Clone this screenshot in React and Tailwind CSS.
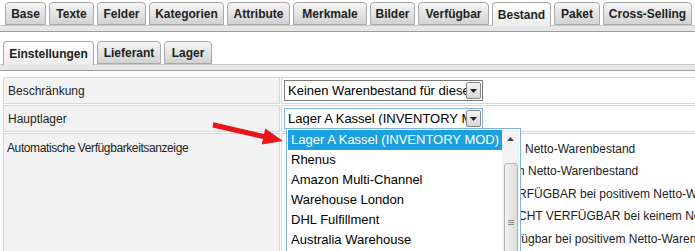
const topTabs = [
  { label: 'Base', w: 'w-[41px]' },
  { label: 'Texte', w: 'w-[45px]' },
  { label: 'Felder', w: 'w-[49px]' },
  { label: 'Kategorien', w: 'w-[75px]' },
  { label: 'Attribute', w: 'w-[63px]' },
  { label: 'Merkmale', w: 'w-[74px]' },
  { label: 'Bilder', w: 'w-[45px]' },
  { label: 'Verfügbar', w: 'w-[71px]' },
  { label: 'Bestand', w: 'w-[59px]', active: true },
  { label: 'Paket', w: 'w-[46px]' },
  { label: 'Cross-Selling', w: 'w-[89px]' },
];

const subTabs = [
  { label: 'Einstellungen', w: 'w-[91px]', active: true },
  { label: 'Lieferant', w: 'w-[64px]' },
  { label: 'Lager', w: 'w-[48px]' },
];

const warehouses = [
  'Lager A Kassel (INVENTORY MOD)',
  'Rhenus',
  'Amazon Multi-Channel',
  'Warehouse London',
  'DHL Fulfillment',
  'Australia Warehouse',
];

const Tab = ({ label, w, active }) => (
  <div
    className={`${w} h-[23px] flex items-center justify-center border border-[#a9a9a9] rounded-t-[4px] text-[12px] font-bold text-[#222] whitespace-nowrap ${
      active
        ? 'bg-gradient-to-b from-white to-[#ececec] border-b-0 h-[24px] -mb-px'
        : 'bg-gradient-to-b from-[#f6f6f6] to-[#d2d2d2]'
    }`}
  >
    {label}
  </div>
);

const TabBar = ({ tabs, className }) => (
  <div>
    <div className={`flex items-end gap-[3px] ${className}`}>
      {tabs.map((t) => (
        <Tab key={t.label} {...t} />
      ))}
    </div>
    <div className="h-[7px] bg-[#e6e6e6] border-t border-[#c8c8c8] border-b border-b-[#9c9c9c]" />
  </div>
);

const Select = ({ value, focused }) => (
  <div
    className={`w-[199px] h-[21px] flex items-center border bg-white ${
      focused ? 'border-[#7eb4ea]' : 'border-[#7a7a7a]'
    }`}
  >
    <span className="flex-1 overflow-hidden whitespace-nowrap pl-[3px] text-[13px] text-black leading-none">
      {value}
    </span>
    <div className="w-[15px] h-[17px] mr-px flex items-center justify-center border border-[#8a8a8a] rounded-[2px] bg-gradient-to-b from-[#f6f6f6] to-[#d6d6d6]">
      <svg width="7" height="4" viewBox="0 0 7 4">
        <path d="M0 0h7L3.5 4z" fill="#222" />
      </svg>
    </div>
  </div>
);

export default function App() {
  return (
    <div className="relative w-[695px] h-[251px] overflow-hidden bg-white font-['Liberation_Sans',Arial,sans-serif]">
      <TabBar tabs={topTabs} className="pl-[5px] pt-[2px]" />
      <div className="h-[9px]" />
      <TabBar tabs={subTabs} className="pl-[3px]" />

      <div className="pl-[3px] pt-[6px]">
        <div className="grid grid-cols-[277px_1fr] gap-px text-[12px] text-[#222]">
          <div className="h-[27px] flex items-center px-[4px] bg-[#f2f2f2] border border-[#d8d8d8]">
            Beschränkung
          </div>
          <div className="h-[27px] flex items-center pl-[2px] border border-[#d8d8d8]">
            <Select value="Keinen Warenbestand für diesen Artikel" />
          </div>
          <div className="h-[27px] flex items-center px-[4px] bg-[#f2f2f2] border border-[#d8d8d8]">
            Hauptlager
          </div>
          <div className="h-[27px] flex items-center pl-[2px] border border-[#d8d8d8]">
            <Select value="Lager A Kassel (INVENTORY MOD)" focused />
          </div>
          <div className="h-[130px] px-[3px] pt-[5px] bg-[#f2f2f2] border border-[#d8d8d8] tracking-[-0.4px] whitespace-nowrap">
            Automatische Verfügbarkeitsanzeige
          </div>
          <div className="h-[130px] border border-[#d8d8d8] pl-[236px] pt-[6px] whitespace-nowrap">
            <div className="h-[22px] pl-[7px]">Netto-Warenbestand</div>
            <div className="h-[23px]">n Netto-Warenbestand</div>
            <div className="h-[22px]">RFÜGBAR bei positivem Netto-Warenbestand</div>
            <div className="h-[23px]">CHT VERFÜGBAR bei keinem Netto-Warenbestand</div>
            <div className="h-[22px]">fügbar bei positivem Netto-Warenbestand</div>
          </div>
        </div>
      </div>

      {/* open dropdown list */}
      <div className="absolute left-[286px] top-[128px] w-[235px] h-[130px] flex border border-[#7eb4ea] bg-white p-px">
        <div className="w-[215px]">
          {warehouses.map((w, i) => (
            <div
              key={w}
              className={`h-[20px] flex items-center px-[3px] text-[13px] whitespace-nowrap ${
                i === 0 ? 'bg-[#1ba0e1] text-white' : 'text-black'
              }`}
            >
              {w}
            </div>
          ))}
        </div>
        <div className="w-[17px] flex flex-col items-center bg-[#f4f4f4]">
          <div className="h-[18px] flex items-center justify-center">
            <svg width="7" height="4" viewBox="0 0 7 4">
              <path d="M0 4h7L3.5 0z" fill="#444" />
            </svg>
          </div>
          <div className="mt-[15px] w-[14px] flex-1 rounded-[3px] border border-[#b4b4b4] bg-gradient-to-r from-[#f3f3f3] to-[#dcdcdc] flex flex-col items-center pt-[56px] gap-[1px]">
            <div className="w-[6px] h-px bg-[#8a8a8a]" />
            <div className="w-[6px] h-px bg-[#8a8a8a]" />
            <div className="w-[6px] h-px bg-[#8a8a8a]" />
          </div>
        </div>
      </div>

      {/* red arrow */}
      <svg className="absolute left-[205px] top-[115px]" width="85" height="35" viewBox="0 0 85 35">
        <polygon
          points="8.5,7.2 59,19.1 60.3,13.4 78,26 56.7,29.6 58,24 7.5,12.6"
          fill="#e8161a"
        />
      </svg>
    </div>
  );
}
